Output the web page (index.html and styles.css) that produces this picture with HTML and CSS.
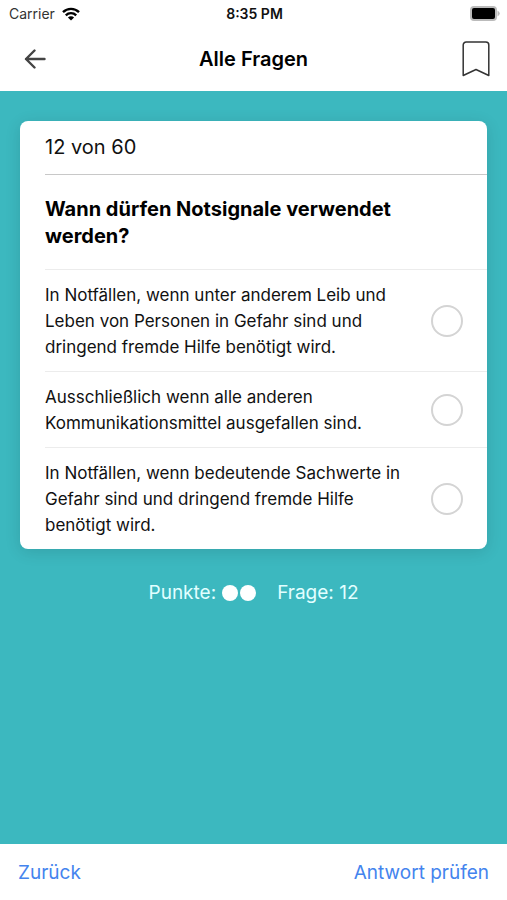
FILE: index.html
```html
<!DOCTYPE html>
<html lang="de">
<head>
<meta charset="utf-8">
<meta name="viewport" content="width=device-width, initial-scale=1">
<title>Alle Fragen</title>
<link rel="stylesheet" href="styles.css">
</head>
<body>
<div class="status">
  <div class="carrier">
    <span>Carrier</span>
    <svg class="wifi" viewBox="0 0 18 14" aria-hidden="true">
      <path d="M1 5.2a11.4 11.4 0 0 1 16 0M3.8 8.3a7.4 7.4 0 0 1 10.4 0"/>
      <path class="wifi-dot" d="M9 13.6L5.9 10.5a4.4 4.4 0 0 1 6.2 0z"/>
    </svg>
  </div>
  <span class="time">8:35 PM</span>
  <svg class="battery" viewBox="0 0 30 15" aria-hidden="true">
    <rect class="battery-shell" x="0" y="0" width="27" height="15" rx="4"/>
    <path class="battery-shell" d="M27.500 4.500q4.500 3 0 6z"/>
    <rect x="2" y="2" width="23" height="11" rx="2"/>
  </svg>
</div>
<header class="toolbar">
  <button class="icon-button" type="button" aria-label="Zurück zur Übersicht">
    <svg class="arrow" viewBox="0 0 22 20" aria-hidden="true"><path d="M20.500 10H2M10.500 1.500L2 10l8.500 8.500"/></svg>
  </button>
  <h1>Alle Fragen</h1>
  <button class="icon-button end" type="button" aria-label="Lesezeichen">
    <svg class="bookmark" viewBox="0 0 28 36" aria-hidden="true"><path d="M1.200 34.500V4a3 3 0 0 1 3-3h19.600a3 3 0 0 1 3 3v30.500L14 28.500z"/></svg>
  </button>
</header>
<main>
  <form class="card" id="quiz">
    <p class="progress">12 von 60</p>
    <fieldset>
      <legend>Wann dürfen Notsignale verwendet werden?</legend>
      <label class="answer">
        <span>In Notfällen, wenn unter anderem Leib und Leben von Personen in Gefahr sind und dringend fremde Hilfe benötigt wird.</span>
        <input type="radio" name="answer" value="1">
      </label>
      <label class="answer">
        <span>Ausschließlich wenn alle anderen Kommunikationsmittel ausgefallen sind.</span>
        <input type="radio" name="answer" value="2">
      </label>
      <label class="answer">
        <span>In Notfällen, wenn bedeutende Sachwerte in Gefahr sind und dringend fremde Hilfe benötigt wird.</span>
        <input type="radio" name="answer" value="3">
      </label>
    </fieldset>
  </form>
  <div class="meta">
    <span class="points">Punkte: <i class="dots"><b></b><b></b></i></span>
    <span>Frage: 12</span>
  </div>
</main>
<footer>
  <button class="action" type="button">Zurück</button>
  <button class="action" type="submit" form="quiz">Antwort prüfen</button>
</footer>
</body>
</html>
```
FILE: styles.css
```css
* {
  box-sizing: border-box;
}

body {
  margin: 0;
  min-height: 100vh;
  display: flex;
  flex-direction: column;
  background: #fff;
  color: #111;
  font-family: Inter, "Liberation Sans", sans-serif;
}

button {
  padding: 0;
  border: 0;
  background: none;
  font: inherit;
  cursor: pointer;
}

svg {
  display: block;
}

.status,
.toolbar {
  display: grid;
  grid-template-columns: 1fr auto 1fr;
  align-items: center;
}

.status {
  height: 27px;
  padding: 0 7px 0 9px;
  font-size: 14px;
}

.carrier {
  display: flex;
  align-items: center;
  gap: 7px;
  color: #333;
}

.wifi {
  width: 18px;
  height: 14px;
  fill: none;
  stroke: #000;
  stroke-width: 2.4;
}

.wifi .wifi-dot {
  fill: #000;
  stroke: none;
}

.time {
  font-weight: 600;
}

.battery {
  width: 30px;
  height: 15px;
  justify-self: end;
}

.battery-shell {
  fill: #bbb;
}

.toolbar {
  height: 64px;
  padding: 0 17px;
}

.toolbar h1 {
  margin: 0;
  color: #000;
  font-size: 20px;
  font-weight: 600;
}

.icon-button {
  justify-self: start;
  padding-left: 7px;
}

.icon-button.end {
  justify-self: end;
}

.arrow {
  width: 22px;
  height: 20px;
  fill: none;
  stroke: #444;
  stroke-width: 2.4;
  stroke-linecap: round;
  stroke-linejoin: round;
}

.bookmark {
  width: 28px;
  height: 36px;
  fill: none;
  stroke: #333;
  stroke-width: 1.5;
  stroke-linejoin: round;
}

main {
  flex: 1;
  padding: 30px 20px;
  background: #3cb8bf;
}

.card {
  padding-left: 25px;
  border-radius: 8px;
  background: #fff;
  box-shadow: 0 3px 16px rgba(0, 0, 0, 0.12);
}

.progress {
  margin: 0;
  padding: 13px 0;
  border-bottom: 1px solid #c8c8c8;
  font-size: 20px;
  line-height: 27px;
}

fieldset {
  min-width: 0;
  margin: 0;
  padding: 0;
  border: 0;
}

legend {
  padding: 21px 72px 19px 0;
  color: #000;
  font-size: 20px;
  font-weight: 700;
  line-height: 27px;
}

.answer {
  display: flex;
  align-items: center;
  justify-content: space-between;
  gap: 24px;
  padding: 12px 24px 11px 0;
  border-top: 1px solid #ececec;
  font-size: 17px;
  line-height: 26px;
}

.answer input {
  appearance: none;
  flex: none;
  width: 32px;
  height: 32px;
  margin: 0;
  border: 2px solid #d4d4d4;
  border-radius: 50%;
}

.answer input:checked {
  border: 10px solid #3cb8bf;
}

.meta {
  display: flex;
  justify-content: center;
  gap: 21px;
  padding-top: 31px;
  color: #e2ffff;
  font-size: 19px;
  line-height: 26px;
}

.points {
  display: flex;
  align-items: center;
  gap: 6px;
}

.dots {
  display: flex;
  gap: 2px;
}

.dots b {
  width: 16px;
  height: 16px;
  border-radius: 50%;
  background: #fff;
}

footer {
  display: flex;
  align-items: center;
  justify-content: space-between;
  height: 56px;
  padding: 2px 18px 0;
}

.action {
  color: #4484ee;
  font-size: 19px;
  line-height: 26px;
}
```
